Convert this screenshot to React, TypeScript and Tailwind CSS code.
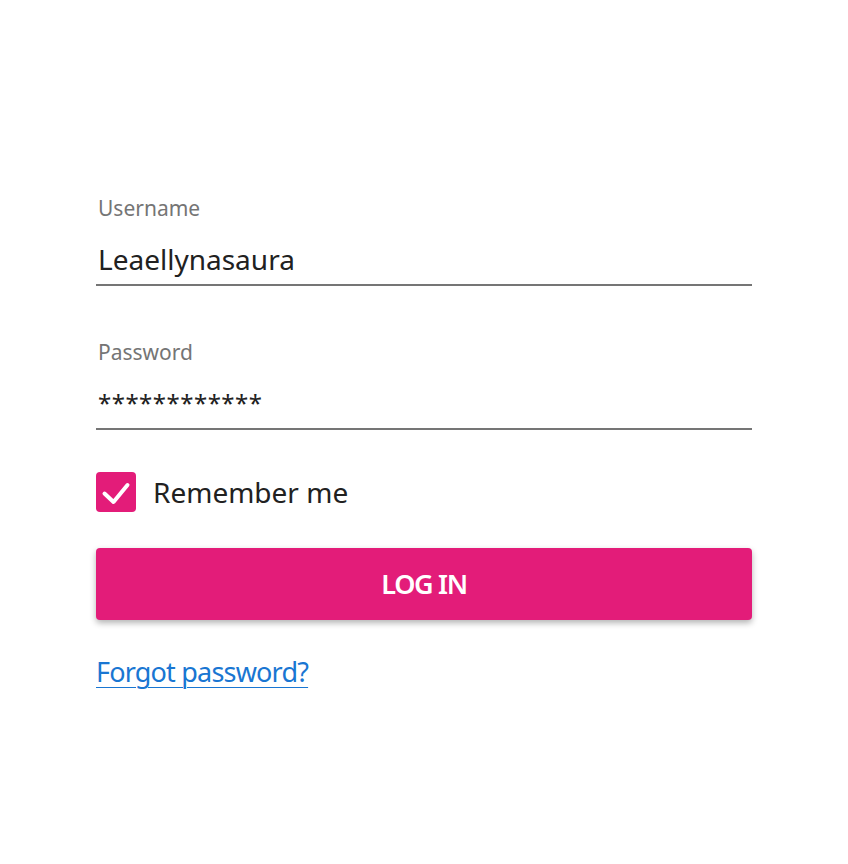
import { useState } from 'react';

const font = { fontFamily: '"Noto Sans", "Open Sans", sans-serif' };

const App = () => {
  const [remember, setRemember] = useState(true);

  return (
    <div className="min-h-screen bg-white" style={font}>
      <div className="w-[656px] ml-[96px] pt-[192px]">
        {/* Username */}
        <label className="block">
          <span className="block text-[21px] leading-[32px] text-[#757575] pl-[2px]">Username</span>
          <div className="border-b-2 border-[#757575] pt-[15px] pb-[5px]">
            <span className="block text-[28px] leading-[40px] text-[#212121] pl-[2px]">
              Leaellynasaura
            </span>
          </div>
        </label>

        {/* Password */}
        <label className="block mt-[50px]">
          <span className="block text-[21px] leading-[32px] text-[#757575] pl-[2px]">Password</span>
          <div className="border-b-2 border-[#757575] pt-[15px] pb-[5px]">
            <span className="block text-[24px] leading-[40px] text-[#212121] pl-[2px] tracking-[0.02em]">************</span>
          </div>
        </label>

        {/* Remember me */}
        <div className="flex items-center gap-[17px] mt-[42px]">
          <button
            onClick={() => setRemember(!remember)}
            className="w-[40px] h-[40px] rounded-[4px] bg-[#e31c79] flex items-center justify-center"
          >
            {remember && (
              <svg width="40" height="40" viewBox="0 0 40 40" fill="none">
                <path d="M8.5 21.5l9 8.5L31.5 13" stroke="white" strokeWidth="4" strokeLinecap="round" strokeLinejoin="round" />
              </svg>
            )}
          </button>
          <span className="text-[28px] leading-[40px] text-[#212121]">Remember me</span>
        </div>

        {/* Log in */}
        <button className="w-full h-[72px] mt-[36px] rounded-[4px] bg-[#e31c79] text-white text-[27px] font-semibold shadow-[0_3px_6px_rgba(0,0,0,0.3)] tracking-[-0.05em]">
          LOG IN
        </button>

        <a href="#" className="inline-block mt-[32px] text-[27px] leading-[40px] text-[#1976d2] underline underline-offset-[5px] decoration-1 tracking-[-0.03em]">
          Forgot password?
        </a>
      </div>
    </div>
  );
};

export default App;
